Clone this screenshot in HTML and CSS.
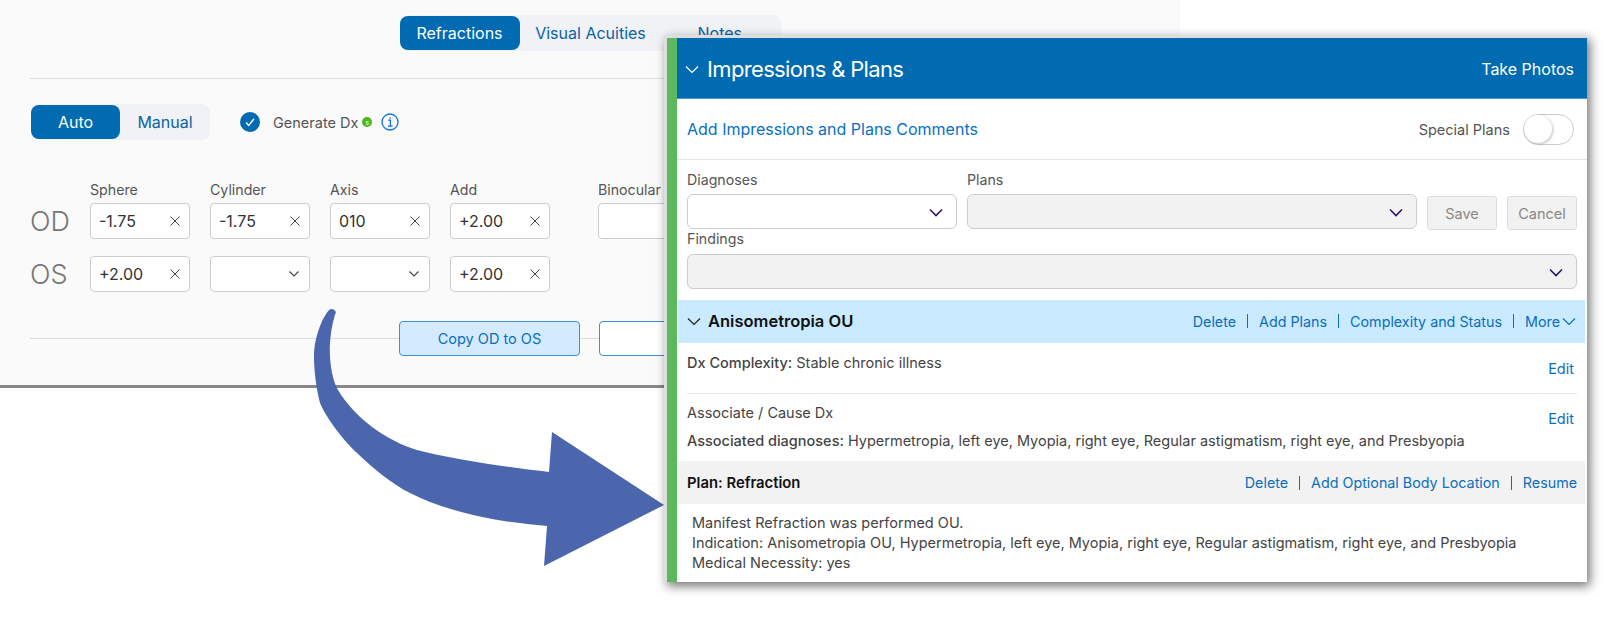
FILE: index.html
```html
<!DOCTYPE html>
<html lang="en">
<head>
    <meta charset="UTF-8">
    <title>Impressions and Plans</title>
    <link rel="stylesheet" href="styles.css">
</head>
<body>

    <div class="refraction-panel">
        <div class="tab-row">
            <div class="segmented">
                <span class="seg-btn seg-active tab-wide">Refractions</span>
                <span class="seg-btn tab-va">Visual Acuities</span>
                <span class="seg-btn tab-notes">Notes</span>
            </div>
        </div>
        <hr class="rule">

        <div class="mode-row">
            <div class="segmented">
                <span class="seg-btn seg-active mode-auto">Auto</span>
                <span class="seg-btn mode-manual">Manual</span>
            </div>
            <svg class="check-icon" width="20" height="20" viewBox="0 0 20 20">
                <circle cx="10" cy="10" r="10" fill="#006bb1"/>
                <path d="M6 10.5l2.8 3L14 6.8" fill="none" stroke="#fff" stroke-width="1.4"/>
            </svg>
            <span class="gen-label">Generate Dx</span>
            <span class="s-badge">s</span>
            <svg class="info-icon" width="18" height="20" viewBox="0 0 18 20">
                <circle cx="9" cy="10" r="8" fill="none" stroke="#0a6fd8" stroke-width="1.3"/>
                <path d="M7.2 8.2H9.4V14M7 14.2h4.6M9 5.2v1.6" fill="none" stroke="#0a6fd8" stroke-width="1.2"/>
            </svg>
        </div>

        <div class="eye-row label-row">
            <span class="eye-name"></span>
            <span class="col-label">Sphere</span>
            <span class="col-label">Cylinder</span>
            <span class="col-label">Axis</span>
            <span class="col-label">Add</span>
            <span class="col-label binocular">Binocular</span>
        </div>
        <div class="eye-row">
            <span class="eye-name">OD</span>
            <div class="val-box"><span>-1.75</span><svg width="10" height="10" viewBox="0 0 10 10"><path d="M.5.5l9 9M9.5.5l-9 9" stroke="#444" stroke-width="1"/></svg></div>
            <div class="val-box"><span>-1.75</span><svg width="10" height="10" viewBox="0 0 10 10"><path d="M.5.5l9 9M9.5.5l-9 9" stroke="#444" stroke-width="1"/></svg></div>
            <div class="val-box"><span>010</span><svg width="10" height="10" viewBox="0 0 10 10"><path d="M.5.5l9 9M9.5.5l-9 9" stroke="#444" stroke-width="1"/></svg></div>
            <div class="val-box"><span>+2.00</span><svg width="10" height="10" viewBox="0 0 10 10"><path d="M.5.5l9 9M9.5.5l-9 9" stroke="#444" stroke-width="1"/></svg></div>
            <div class="val-box binocular"></div>
        </div>
        <div class="eye-row second-eye">
            <span class="eye-name">OS</span>
            <div class="val-box"><span>+2.00</span><svg width="10" height="10" viewBox="0 0 10 10"><path d="M.5.5l9 9M9.5.5l-9 9" stroke="#444" stroke-width="1"/></svg></div>
            <div class="val-box">
                <span></span>
                <svg width="12" height="8" viewBox="0 0 12 8"><path d="M1.5 1.5L6 6l4.5-4.5" fill="none" stroke="#444" stroke-width="1.2"/></svg>
            </div>
            <div class="val-box">
                <span></span>
                <svg width="12" height="8" viewBox="0 0 12 8"><path d="M1.5 1.5L6 6l4.5-4.5" fill="none" stroke="#444" stroke-width="1.2"/></svg>
            </div>
            <div class="val-box"><span>+2.00</span><svg width="10" height="10" viewBox="0 0 10 10"><path d="M.5.5l9 9M9.5.5l-9 9" stroke="#444" stroke-width="1"/></svg></div>
        </div>

        <div class="copy-row">
            <span class="outline-btn copy-active">Copy OD to OS</span>
            <span class="outline-btn copy-blank"></span>
        </div>
    </div>

    <!-- big arrow from the refraction panel over to the plan -->
    <svg class="flow-arrow" width="400" height="300" viewBox="0 0 400 300">
        <path fill="#4c66ae" d="M36 32Q33 27 29 30C22 38 14 58 14 77C14 90 16 108 20 123C25 135 40 157 57 173C75 190 92 204 110 213C145 231 195 242 247 246L244 286L364 225L252 152L249 192C215 188 160 181 117 170C85 160 55 138 38 110C32 100 29 80 30 63C31 50 33 40 36 32Z"/>
    </svg>

    <div class="plans-window">
        <div class="green-bar"></div>
        <div class="plans-content">
            <div class="plans-header">
                <div class="header-title">
                    <svg width="14" height="9" viewBox="0 0 14 9"><path d="M1 1.5l6 6 6-6" fill="none" stroke="#fff" stroke-width="1.2"/></svg>
                    <span>Impressions &amp; Plans</span>
                </div>
                <span class="take-photos">Take Photos</span>
            </div>

            <div class="comment-row">
                <span class="comment-link">Add Impressions and Plans Comments</span>
                <div class="special-plans">
                    <span>Special Plans</span>
                    <div class="toggle"><div class="toggle-knob"></div></div>
                </div>
            </div>

            <div class="entry-form">
                <div class="form-line">
                    <div class="field field-dx">
                        <label>Diagnoses</label>
                        <div class="select-box">
                            <svg width="14" height="9" viewBox="0 0 14 9"><path d="M1 1.5l6 6 6-6" fill="none" stroke="#2c1468" stroke-width="1.6"/></svg>
                        </div>
                    </div>
                    <div class="field field-plans">
                        <label>Plans</label>
                        <div class="select-box is-disabled">
                            <svg width="14" height="9" viewBox="0 0 14 9"><path d="M1 1.5l6 6 6-6" fill="none" stroke="#2c1468" stroke-width="1.6"/></svg>
                        </div>
                    </div>
                    <span class="form-btn btn-save">Save</span>
                    <span class="form-btn btn-cancel">Cancel</span>
                </div>
                <div class="field field-findings">
                    <label>Findings</label>
                    <div class="select-box is-disabled">
                        <svg width="14" height="9" viewBox="0 0 14 9"><path d="M1 1.5l6 6 6-6" fill="none" stroke="#2c1468" stroke-width="1.6"/></svg>
                    </div>
                </div>
            </div>

            <div class="dx-band">
                <div class="dx-title">
                    <svg width="14" height="9" viewBox="0 0 14 9"><path d="M1 1.5l6 6 6-6" fill="none" stroke="#222" stroke-width="1.2"/></svg>
                    <strong>Anisometropia OU</strong>
                </div>
                <div class="action-links">
                    <span>Delete</span><i></i><span>Add Plans</span><i></i><span>Complexity and Status</span><i></i>
                    <span class="more-link">More<svg width="14" height="9" viewBox="0 0 14 9"><path d="M1 1.5l6 6 6-6" fill="none" stroke="#0a6ebd" stroke-width="1.2"/></svg></span>
                </div>
            </div>

            <div class="info-row complexity-row">
                <div><span class="key">Dx Complexity:</span> Stable chronic illness</div>
                <span class="edit-link">Edit</span>
            </div>

            <div class="info-row cause-row">
                <div>
                    <div>Associate / Cause Dx</div>
                    <div class="assoc-line"><span class="key">Associated diagnoses:</span> Hypermetropia, left eye, Myopia, right eye, Regular astigmatism, right eye, and Presbyopia</div>
                </div>
                <span class="edit-link">Edit</span>
            </div>

            <div class="plan-band">
                <strong>Plan: Refraction</strong>
                <div class="action-links">
                    <span>Delete</span><i></i><span>Add Optional Body Location</span><i></i><span>Resume</span>
                </div>
            </div>

            <div class="plan-text">
                Manifest Refraction was performed OU.<br>
                Indication: Anisometropia OU, Hypermetropia, left eye, Myopia, right eye, Regular astigmatism, right eye, and Presbyopia<br>
                Medical Necessity: yes
            </div>
        </div>
    </div>

</body>
</html>
```

FILE: styles.css
```css
body {
    margin: 0;
    background-color: #fff;
    font-family: Inter, "Liberation Sans", sans-serif;
    color: #444;
    overflow: hidden;
}

.refraction-panel {
    width: 1180px;
    height: 385px;
    background-color: #fafafa;
    border-bottom: 3px solid #888;
}
.tab-row {
    display: flex;
    justify-content: center;
    padding-top: 15px;
}
.segmented {
    display: flex;
    height: 36px;
    background-color: #f0f2f5;
    border-radius: 8px;
}
.seg-btn {
    display: flex;
    align-items: center;
    justify-content: center;
    font-size: 16px;
    color: #0a62a8;
}
.seg-active {
    background-color: #006bb1;
    color: #fff;
    border-radius: 8px;
    margin: 1px 0;
}
.tab-wide { width: 120px; }
.tab-va { width: 142px; }
.tab-notes {
    width: 119px;
    box-sizing: border-box;
    padding-left: 36px;
    justify-content: flex-start;
}
.rule {
    margin: 27px 30px 0;
    border: 0;
    border-top: 1px solid #ddd;
}

.mode-row {
    display: flex;
    align-items: center;
    margin: 25px 0 0 31px;
    height: 36px;
}
.mode-auto { width: 89px; }
.mode-manual { width: 90px; }
.check-icon { margin-left: 30px; }
.gen-label {
    margin-left: 13px;
    font-size: 14.5px;
    color: #555;
}
.s-badge {
    display: flex;
    align-items: center;
    justify-content: center;
    width: 10px;
    height: 10px;
    margin-left: 4px;
    border-radius: 50%;
    background-color: #4cb81c;
    color: #fff;
    font-size: 7px;
}
.info-icon { margin-left: 9px; }

.eye-row {
    display: flex;
    align-items: center;
    gap: 20px;
    padding-left: 30px;
}
.label-row {
    margin-top: 40px;
    margin-bottom: 5px;
    height: 18px;
}
.second-eye { margin-top: 17px; }
.eye-name {
    width: 40px;
    font-size: 27px;
    font-weight: 300;
    color: #777;
}
.col-label {
    width: 100px;
    font-size: 14.2px;
    color: #555;
}
.binocular { margin-left: 28px; }
.val-box {
    display: flex;
    align-items: center;
    justify-content: space-between;
    width: 100px;
    height: 36px;
    box-sizing: border-box;
    padding: 0 9px 0 8px;
    background-color: #fff;
    border: 1.5px solid #ccc;
    border-radius: 4px;
    font-size: 16px;
    color: #333;
}

.copy-row {
    display: flex;
    gap: 19px;
    margin: 29px 0 0 30px;
    padding-left: 369px;
    background: linear-gradient(#ddd, #ddd) center / 100% 1px no-repeat;
}
.outline-btn {
    display: flex;
    align-items: center;
    justify-content: center;
    height: 35px;
    box-sizing: border-box;
    border: 1.5px solid #3e8fd6;
    border-radius: 4px;
    background-color: #fff;
    font-size: 14.5px;
    color: #0a6ebd;
}
.copy-active {
    width: 181px;
    background-color: #d3eaff;
}
.copy-blank { width: 180px; }

.flow-arrow {
    position: absolute;
    left: 300px;
    top: 280px;
    overflow: visible;
}

.plans-window {
    position: absolute;
    left: 664px;
    top: 35px;
    display: flex;
    width: 923px;
    height: 547px;
    box-sizing: border-box;
    background-color: #fff;
    border-top: 3px solid #ddd;
    border-left: 3px solid #ddd;
    box-shadow: 3px 4px 10px rgba(0, 0, 0, 0.55);
    font-size: 14.5px;
}
.green-bar {
    width: 10px;
    background-color: #5cb85c;
}
.plans-content {
    flex: 1;
    min-width: 0;
}
.plans-header {
    display: flex;
    align-items: center;
    justify-content: space-between;
    height: 61px;
    box-sizing: border-box;
    padding: 2px 13px 0 8px;
    background-color: #006bb1;
    border-bottom: 1px solid #4a94cf;
    color: #fff;
}
.header-title {
    display: flex;
    align-items: center;
    gap: 8px;
    font-size: 22px;
    letter-spacing: -0.65px;
}
.take-photos { font-size: 16px; }

.comment-row {
    display: flex;
    align-items: center;
    justify-content: space-between;
    height: 60px;
    padding: 0 13px 0 10px;
    border-bottom: 1px solid #e6e6e6;
}
.comment-link {
    font-size: 16px;
    color: #0670c4;
}
.special-plans {
    display: flex;
    align-items: center;
    gap: 13px;
    color: #555;
}
.toggle {
    width: 51px;
    height: 31px;
    box-sizing: border-box;
    border: 1.5px solid #ccc;
    border-radius: 16px;
    background-color: #fff;
}
.toggle-knob {
    width: 28px;
    height: 28px;
    border-radius: 50%;
    background-color: #fff;
    box-shadow: 1px 1px 3px rgba(0, 0, 0, 0.25);
}

.entry-form {
    padding: 11px 10px 0;
}
.form-line {
    display: flex;
    align-items: flex-end;
    gap: 10px;
}
.field-dx { width: 270px; }
.field-plans { width: 450px; }
.field-findings { margin-top: 1px; }
.field label {
    display: block;
    height: 23px;
    font-size: 14.2px;
    line-height: 18px;
    color: #555;
}
.field-findings label { height: 24px; }
.select-box {
    display: flex;
    align-items: center;
    justify-content: flex-end;
    height: 35px;
    box-sizing: border-box;
    padding: 2px 13px 0 0;
    background-color: #fff;
    border: 1.5px solid #ccc;
    border-radius: 6px;
}
.is-disabled { background-color: #f2f2f2; }
.form-btn {
    display: flex;
    align-items: center;
    justify-content: center;
    width: 70px;
    height: 34px;
    box-sizing: border-box;
    margin-bottom: -1px;
    background-color: #f2f2f2;
    border: 1.5px solid #ddd;
    border-radius: 3px;
    color: #888;
}

.dx-band {
    display: flex;
    align-items: center;
    justify-content: space-between;
    height: 43px;
    margin: 11px 2px 0 1px;
    padding: 0 9px 1px;
    box-sizing: border-box;
    background-color: #c9eaff;
}
.dx-title {
    display: flex;
    align-items: center;
    gap: 7px;
    font-size: 16.5px;
    color: #111;
}
.dx-title strong { font-weight: 600; }
.action-links {
    display: flex;
    align-items: center;
    font-size: 14.3px;
    color: #0a6ebd;
}
.action-links i {
    width: 1px;
    height: 14px;
    margin: 0 11px;
    background-color: #0a6ebd;
}
.more-link {
    display: flex;
    align-items: center;
    gap: 2px;
}

.info-row {
    display: flex;
    justify-content: space-between;
    margin: 0 10px;
    color: #444;
}
.key { font-weight: 500; }
.complexity-row {
    height: 51px;
    padding-top: 11px;
    box-sizing: border-box;
    border-bottom: 1px solid #e6e6e6;
}
.cause-row {
    height: 67px;
    padding-top: 10px;
    box-sizing: border-box;
}
.edit-link {
    margin: 6px 3px 0 0;
    color: #0a6ebd;
}
.assoc-line { margin-top: 11px; }

.plan-band {
    display: flex;
    align-items: center;
    justify-content: space-between;
    height: 43px;
    box-sizing: border-box;
    margin: 0 2px 0 1px;
    padding: 0 8px 0 9px;
    background-color: #f2f2f2;
}
.plan-band strong {
    font-size: 14.8px;
    font-weight: 600;
    color: #111;
}
.plan-text {
    padding: 9px 15px 0;
    line-height: 20px;
}
```
